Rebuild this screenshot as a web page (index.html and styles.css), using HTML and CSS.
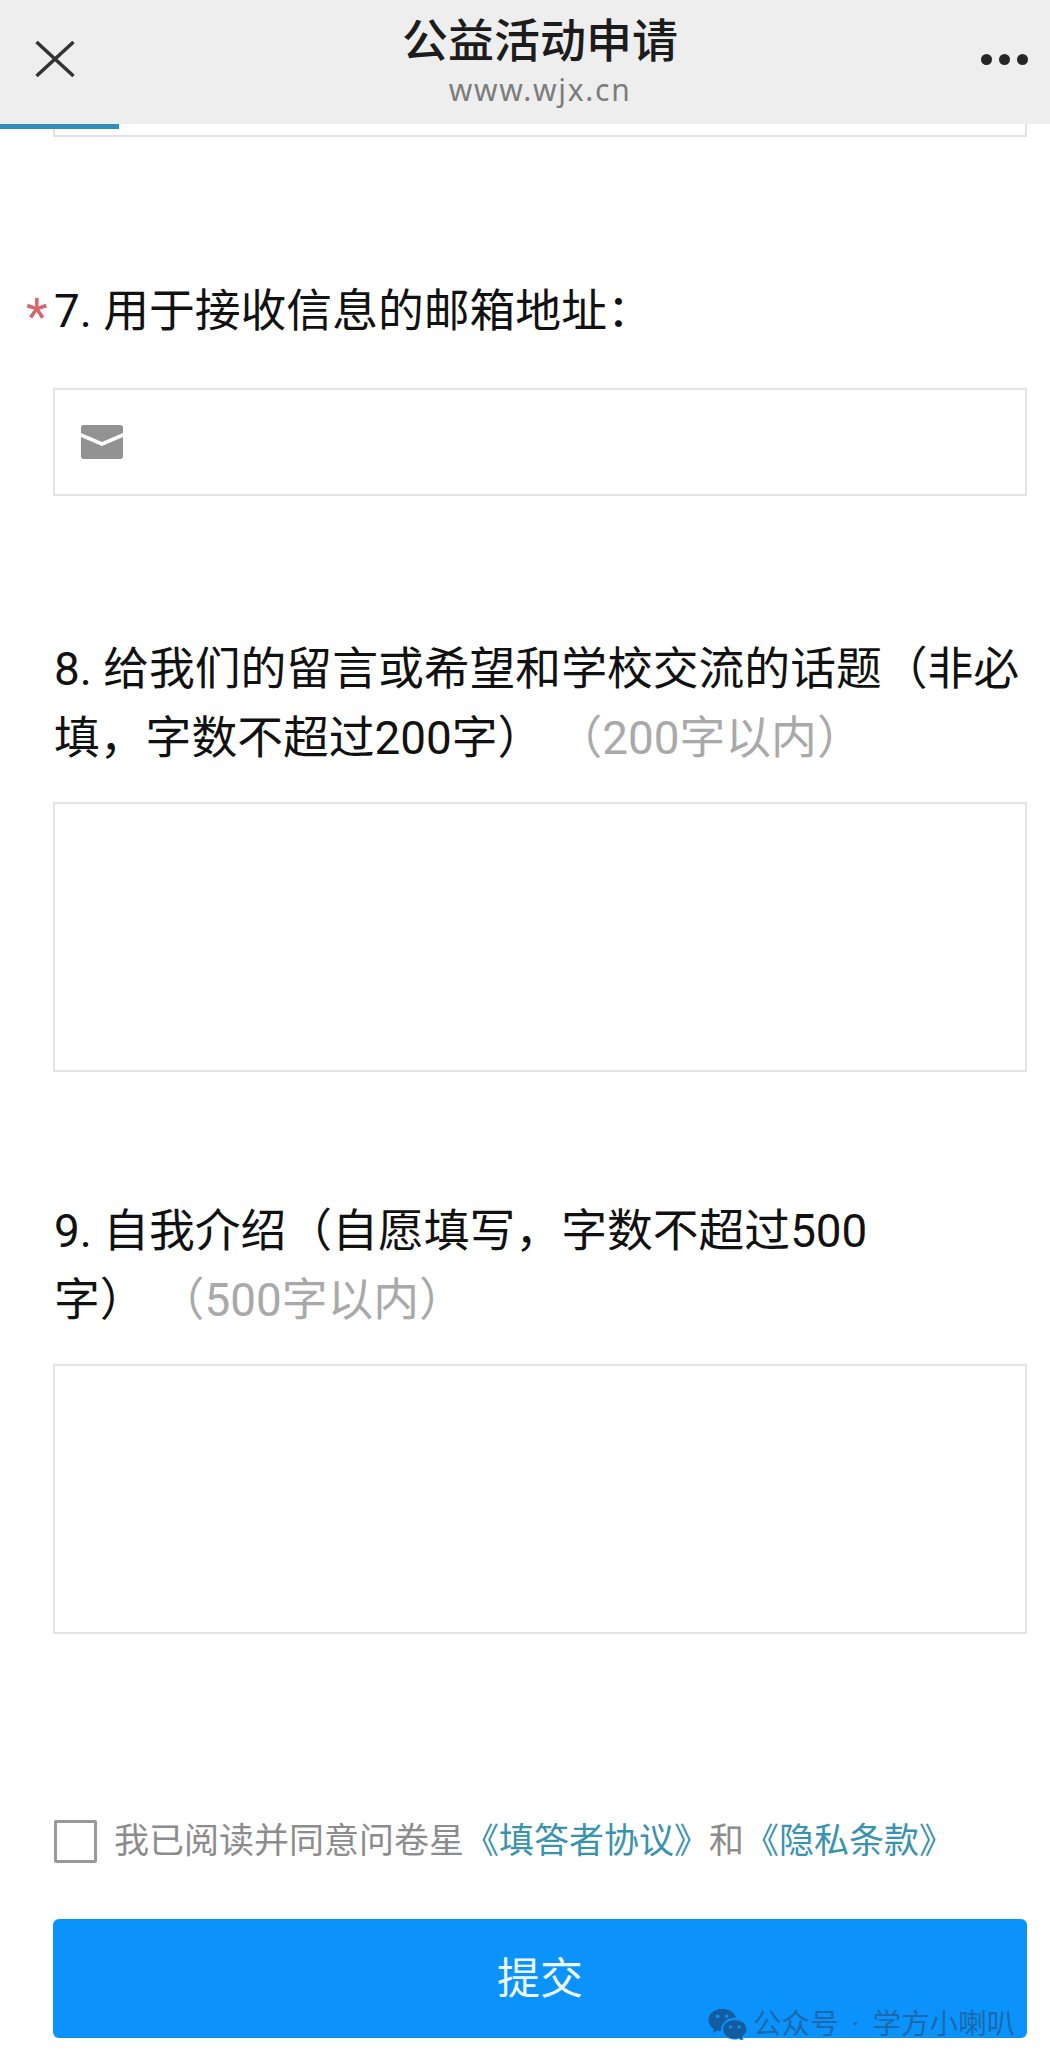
FILE: index.html
```html
<!DOCTYPE html>
<html lang="zh-CN">
<head>
  <meta charset="UTF-8">
  <title>公益活动申请</title>
  <link rel="stylesheet" href="styles.css">
</head>
<body>
  <header class="topbar">
    <svg class="close-icon" viewBox="0 0 40 36" aria-hidden="true">
      <path d="M1.5 1 L38.5 35 M38.5 1 L1.5 35"/>
    </svg>
    <div class="topbar-title">
      <div class="title">公益活动申请</div>
      <div class="url">www.wjx.cn</div>
    </div>
    <div class="more">
      <span class="dot"></span><span class="dot"></span><span class="dot"></span>
    </div>
    <div class="progress"></div>
  </header>

  <div class="container">
    <div class="prev-box"></div>

    <div class="question q7">
      <div class="q-title"><span class="required">*</span>7. 用于接收信息的邮箱地址：</div>
      <div class="email-box">
        <svg class="mail-icon" viewBox="0 0 42 34" aria-hidden="true">
          <path d="M3 0 H39 A3 3 0 0 1 42 3 V8 L21 17 L0 8 V3 A3 3 0 0 1 3 0 Z"/>
          <path d="M0 12 L21 21 L42 12 V31 A3 3 0 0 1 39 34 H3 A3 3 0 0 1 0 31 Z"/>
        </svg>
        <input type="email" class="email-input">
      </div>
    </div>

    <div class="question q8">
      <div class="q-title">8. 给我们的留言或希望和学校交流的话题（非必<br>填，字数不超过200字）<span class="limit">（200字以内）</span></div>
      <textarea class="answer"></textarea>
    </div>

    <div class="question q9">
      <div class="q-title">9. 自我介绍（自愿填写，字数不超过500<br>字）<span class="limit">（500字以内）</span></div>
      <textarea class="answer"></textarea>
    </div>

    <div class="agree">
      <span class="checkbox"></span>
      <span>我已阅读并同意问卷星<a class="link">《填答者协议》</a>和<a class="link">《隐私条款》</a></span>
    </div>

    <button class="submit">提交</button>
  </div>

  <div class="watermark">
    <svg class="wechat-icon" viewBox="0 0 40 32" aria-hidden="true">
      <path class="bubble" d="M15 0 C6.7 0 0 5.4 0 12 C0 15.8 2.2 19 5.6 21.200 L4 26 L9.600 23.200 C11 23.600 12.600 23.800 14.200 23.800 C14 23 13.800 22 13.800 21.200 C13.800 15 19.800 10 27.400 10 L29.600 10.200 C28 4.400 22 0 15 0 Z"/>
      <path class="bubble" d="M27.500 11.500 C20.600 11.500 15 16 15 21.500 C15 27 20.600 31.500 27.500 31.500 C29 31.500 30.400 31.300 31.700 30.900 L36 33 L35 29 C38 27.200 40 24.500 40 21.500 C40 16 34.400 11.500 27.500 11.500 Z"/>
      <circle class="eye" cx="10" cy="8" r="1.800"/>
      <circle class="eye" cx="19" cy="8" r="1.800"/>
      <circle class="eye" cx="23" cy="19" r="1.600"/>
      <circle class="eye" cx="32" cy="19" r="1.600"/>
    </svg>
    <span class="watermark-text">公众号 · 学方小喇叭</span>
  </div>
</body>
</html>
```

FILE: styles.css
```css
* {
  box-sizing: border-box;
}

body {
  margin: 0;
  height: 2066px;
  overflow: hidden;
  position: relative;
  background: #fff;
  color: #111;
  font-family: Roboto, "Noto Sans CJK SC", sans-serif;
}

.topbar {
  height: 124px;
  background: #eeeeee;
  display: flex;
  align-items: flex-start;
  justify-content: space-between;
  padding: 0 22px 0 35px;
  position: relative;
}

.close-icon {
  width: 40px;
  height: 36px;
  margin-top: 41px;
  fill: none;
  stroke: #333;
  stroke-width: 3.5;
}

.topbar-title {
  text-align: center;
  flex: 1;
  padding-left: 24px;
}

.title {
  font-size: 46px;
  font-weight: 500;
  line-height: 54px;
  margin-top: 14px;
  color: #1c1c1c;
}

.url {
  font-size: 30px;
  line-height: 36px;
  margin-top: 4px;
  letter-spacing: 1.7px;
  color: #7c7c7c;
  font-family: "Noto Sans", sans-serif;
}

.more {
  display: flex;
  gap: 7px;
  margin-top: 54px;
}

.dot {
  width: 11px;
  height: 11px;
  border-radius: 50%;
  background: #262626;
}

.progress {
  position: absolute;
  left: 0;
  bottom: -5px;
  width: 119px;
  height: 5px;
  background: #2f8fbb;
}

.container {
  padding: 0 23px 0 53px;
}

.prev-box {
  height: 13px;
  background: #fff;
  border: 2px solid #e3e3e3;
  border-top: 0;
}

.q-title {
  font-size: 45.8px;
  line-height: 69px;
  color: #111;
  position: relative;
  padding-left: 1px;
}

.required {
  position: absolute;
  left: -27px;
  top: 6px;
  color: #d9656a;
  font-size: 50px;
}

.limit {
  color: #a9a9a9;
  margin-left: 36px;
}

.q7 {
  margin-top: 140px;
}

.q7 .q-title {
  margin-bottom: 42px;
}

.q8 {
  margin-top: 139px;
}

.q9 {
  margin-top: 125px;
}

.q8 .q-title,
.q9 .q-title {
  margin-bottom: 29px;
}

.email-box {
  height: 108px;
  border: 2px solid #e3e3e3;
  display: flex;
  align-items: center;
  padding-left: 26px;
  gap: 20px;
}

.mail-icon {
  width: 42px;
  height: 34px;
  fill: #929292;
}

.email-input {
  flex: 1;
  border: 0;
  outline: 0;
  height: 100%;
  background: transparent;
}

.answer {
  display: block;
  width: 100%;
  height: 270px;
  border: 2px solid #e3e3e3;
  border-radius: 0;
  outline: 0;
  resize: none;
  background: #fff;
}

.agree {
  display: flex;
  align-items: center;
  gap: 17px;
  margin-top: 186px;
  padding-left: 1px;
  font-size: 35px;
  line-height: 42px;
  color: #8c8c8c;
}

.checkbox {
  width: 43px;
  height: 43px;
  border: 3px solid #999;
  border-radius: 2px;
  flex: none;
}

.link {
  color: #3a93ae;
}

.submit {
  display: block;
  width: 100%;
  height: 119px;
  margin-top: 56px;
  padding: 0 0 8px;
  border: 0;
  border-radius: 6px;
  background: #0b93fb;
  color: #eef8ff;
  font-size: 43px;
  font-family: inherit;
}

.watermark {
  position: absolute;
  left: 708px;
  top: 2006px;
  display: flex;
  align-items: center;
  gap: 6px;
  font-size: 28.6px;
  line-height: 36px;
  color: #1a69ad;
}

.watermark-text {
  word-spacing: 6px;
}

.wechat-icon {
  width: 39px;
  height: 32px;
}

.bubble {
  fill: #135c9e;
  stroke: #0b93fb;
  stroke-width: 1;
}

.eye {
  fill: #0b93fb;
}
```
